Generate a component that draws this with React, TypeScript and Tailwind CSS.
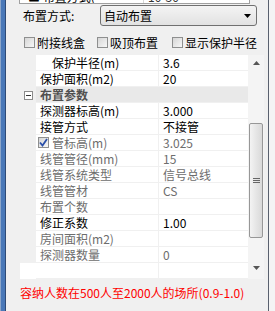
import React from "react";

type Prop = {
  label: string;
  value?: string;
  off?: boolean;
  child?: boolean;
  check?: boolean;
  category?: boolean;
  blank?: boolean;
};

const rows: Prop[] = [
  { label: "保护半径(m)", value: "3.6", child: true },
  { label: "保护面积(m2)", value: "20" },
  { label: "布置参数", category: true },
  { label: "探测器标高(m)", value: "3.000" },
  { label: "接管方式", value: "不接管" },
  { label: "管标高(m)", value: "3.025", off: true, check: true },
  { label: "线管管径(mm)", value: "15", off: true },
  { label: "线管系统类型", value: "信号总线", off: true },
  { label: "线管管材", value: "CS", off: true },
  { label: "布置个数", value: "", off: true },
  { label: "修正系数", value: "1.00" },
  { label: "房间面积(m2)", value: "", off: true },
  { label: "探测器数量", value: "0", off: true },
  { label: "", blank: true },
];

function CheckBox({ checked }: { checked?: boolean }) {
  return (
    <span className="relative flex h-[11px] w-[11px] shrink-0 items-center justify-center border border-[#8e8f8f] bg-linear-to-br from-[#d6d6d6] to-[#f7f7f7]">
      {checked && (
        <svg width="9" height="9" viewBox="0 0 9 9" className="absolute">
          <path d="M1 4.5 L3.5 7.5 L8 1" fill="none" stroke="#2a4fa8" strokeWidth="1.8" />
        </svg>
      )}
    </span>
  );
}

function GridRow({ row }: { row: Prop }) {
  if (row.category) {
    return (
      <div className="flex h-[16px]">
        <div className="flex w-[16px] items-center justify-center">
          <span className="flex h-[9px] w-[9px] items-center justify-center border border-[#8b8b8b] bg-white">
            <span className="h-px w-[5px] bg-[#333]" />
          </span>
        </div>
        <div className="flex w-[212px] items-center border-b border-[#f0f0f0] bg-[#e9e9e9] pl-[4px] font-bold text-[#505050]">
          {row.label}
        </div>
      </div>
    );
  }
  const color = row.off ? "text-[#6d6d6d]" : "text-black";
  return (
    <div className={`flex h-[16px] ${row.blank ? "bg-white" : ""}`}>
      <div className="w-[16px]" />
      <div
        className={`flex w-[123px] items-center gap-[3px] border-r border-b border-[#f0f0f0] bg-white ${color} ${
          row.child ? "pl-[16px]" : row.check ? "pl-[2px]" : "pl-[4px]"
        }`}
      >
        {row.check && <CheckBox checked />}
        <span className="leading-[15px]">{row.label}</span>
      </div>
      <div className={`flex w-[89px] items-center border-b border-[#f0f0f0] bg-white pl-[4px] ${color}`}>
        <span className="leading-[15px]">{row.value}</span>
      </div>
    </div>
  );
}

function ScrollBar() {
  return (
    <div className="flex w-[16px] flex-col items-center bg-[#f4f4f4]">
      <svg width="7" height="4" viewBox="0 0 7 4" className="mt-[6px]">
        <path d="M0 4 L3.5 0 L7 4 Z" fill="#555" />
      </svg>
      <div className="mt-[58px] flex h-[115px] w-[14px] items-center justify-center rounded-[2px] border border-[#979797] bg-linear-to-r from-[#f3f3f3] to-[#d9d9d9]">
        <div className="flex flex-col gap-[1px]">
          <span className="h-px w-[7px] bg-[#666]" />
          <span className="h-px w-[7px] bg-[#666]" />
          <span className="h-px w-[7px] bg-[#666]" />
        </div>
      </div>
      <svg width="7" height="4" viewBox="0 0 7 4" className="mt-[28px]">
        <path d="M0 0 L3.5 4 L7 0 Z" fill="#555" />
      </svg>
    </div>
  );
}

export default function App() {
  return (
    <div className="flex h-[311px] w-[275px] overflow-hidden bg-[#f0f0f0] font-['Noto_Sans_CJK_SC',sans-serif] text-[12px] text-black">
      <div className="h-full w-[6px] border-l border-r border-l-[#8da6c9] border-r-[#2e4a76] bg-[#4a78b8]" />

      <div className="flex w-[262px] flex-col">
        {/* row cut off at the top */}
        <div className="ml-[13px] flex h-[4px] w-[231px] overflow-hidden border-x border-b border-[#a0a0a0] bg-white">
          <div className="w-[124px] border-r border-[#d8d8d8] pl-[8px] leading-[12px] -mt-[9px]">■ 布置方式(</div>
          <div className="pl-[4px] leading-[12px] -mt-[9px] text-[#333]">10-30</div>
        </div>

        <div className="mt-[1px] flex h-[21px] items-center">
          <span className="ml-[17px] w-[77px]">布置方式:</span>
          <div className="flex h-[21px] w-[157px] items-center justify-between rounded-[3px] border border-[#707070] bg-linear-to-b from-[#f4f4f4] to-[#e2e2e2] pl-[3px] pr-[5px]">
            <span>自动布置</span>
            <svg width="7" height="4" viewBox="0 0 7 4">
              <path d="M0 0 L3.5 4 L7 0 Z" fill="#000" />
            </svg>
          </div>
        </div>

        <div className="mt-[10px] flex h-[13px] items-center">
          <label className="ml-[18px] flex w-[73px] items-center gap-[2px]">
            <CheckBox />
            <span>附接线盒</span>
          </label>
          <label className="flex w-[75px] items-center gap-[2px]">
            <CheckBox />
            <span>吸顶布置</span>
          </label>
          <label className="flex items-center gap-[2px]">
            <CheckBox />
            <span>显示保护半径</span>
          </label>
        </div>

        <div className="ml-[14px] mt-[6px] flex w-[244px]">
          <div className="flex w-[228px] flex-col">
            {rows.map((r, i) => (
              <GridRow key={i} row={r} />
            ))}
          </div>
          <ScrollBar />
        </div>

        <p className="ml-[14px] mt-[7px] leading-[14px] text-[#ff0000]">
          容纳人数在500人至2000人的场所(0.9-1.0)
        </p>
      </div>

      <div className="h-full w-px bg-[#59606e]" />
      <div className="h-full flex-1 bg-[#f4f4f4]" />
    </div>
  );
}
